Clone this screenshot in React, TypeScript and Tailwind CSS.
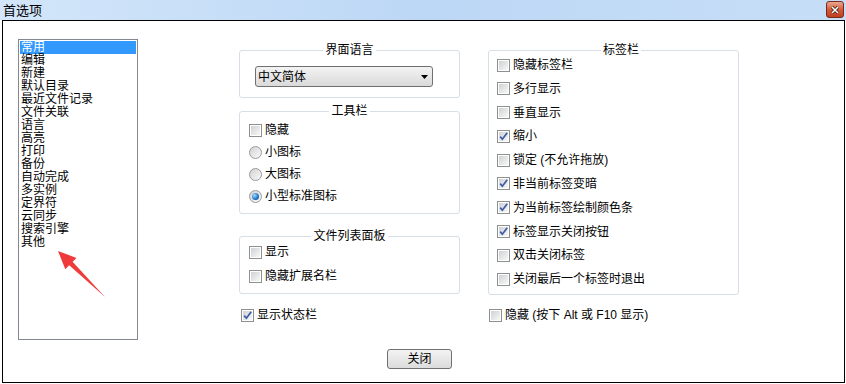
import React from 'react';

// left navigation list of the preferences dialog
const pages = [
  "常用", "编辑", "新建", "默认目录", "最近文件记录", "文件关联", "语言", "高亮",
  "打印", "备份", "自动完成", "多实例", "定界符", "云同步", "搜索引擎", "其他",
];

const tabOptions = [
  { label: "隐藏标签栏", checked: false },
  { label: "多行显示", checked: false },
  { label: "垂直显示", checked: false },
  { label: "缩小", checked: true },
  { label: "锁定 (不允许拖放)", checked: false },
  { label: "非当前标签变暗", checked: true },
  { label: "为当前标签绘制颜色条", checked: true },
  { label: "标签显示关闭按钮", checked: true },
  { label: "双击关闭标签", checked: false },
  { label: "关闭最后一个标签时退出", checked: false },
];

function CheckBox({ checked }: { checked?: boolean }) {
  return (
    <span className="w-[13px] h-[13px] shrink-0 border border-[#8e8f8f] bg-white p-[1px] flex">
      <span className="flex-1 bg-linear-to-br from-[#cfd1d4] to-[#f8f8f8] flex items-center justify-center">
        {checked && (
          <svg width="9" height="9" viewBox="0 0 9 9">
            <path d="M1.2 4.6 L3.4 7.2 L8.2 0.8" stroke="#3d5aa6" strokeWidth="1.7" fill="none" />
          </svg>
        )}
      </span>
    </span>
  );
}

function Radio({ selected }: { selected?: boolean }) {
  return (
    <span className="w-[13px] h-[13px] shrink-0 rounded-full border border-[#9a9a9a] bg-linear-to-br from-[#d2d2d2] to-[#fafafa] flex items-center justify-center">
      {selected && (
        <span className="w-[7px] h-[7px] rounded-full bg-[radial-gradient(circle_at_35%_35%,#9fdcff,#1f72c6_60%,#0b4a92)]" />
      )}
    </span>
  );
}

function Group({ title, legendClass, className, children }: {
  title: string; legendClass?: string; className?: string; children: React.ReactNode;
}) {
  return (
    <fieldset className={`border border-[#d5dfe5] rounded-[3px] ${className ?? ''}`}>
      <legend className={`px-[2px] leading-[14px] ${legendClass ?? 'mx-auto'}`}>{title}</legend>
      {children}
    </fieldset>
  );
}

export default function App() {
  return (
    <div className="relative w-[846px] h-[384px] bg-white overflow-hidden text-[12px] text-black font-['Liberation_Sans','Noto_Sans_CJK_SC',sans-serif]">
      {/* title bar */}
      <div className="h-[20px] flex items-start justify-between bg-linear-to-r from-[#d3e6fa] via-[#bcd7f5] to-[#c7def7]">
        <span className="pl-[3px] pt-[1px] text-[13px] leading-[20px]">首选项</span>
        <span className="mt-[1px] mr-[2px] w-[18px] h-[17px] rounded-[3px] border border-[#7a2a1c] bg-linear-to-b from-[#eaa893] via-[#d45a3b] to-[#c03f1e] flex items-center justify-center">
          <svg width="8" height="8" viewBox="0 0 8 8">
            <path d="M1 1 L7 7 M7 1 L1 7" stroke="#3a1208" strokeWidth="3" />
            <path d="M1 1 L7 7 M7 1 L1 7" stroke="#ffffff" strokeWidth="1.6" />
          </svg>
        </span>
      </div>

      {/* dialog body */}
      <div className="ml-[2px] w-[843px] h-[363px] border border-black flex flex-col">
        <div className="flex items-start">
          <div className="ml-[15px] mt-[18px] w-[120px] h-[301px] border border-[#828790] pt-[1px] px-[1px] leading-[13px]">
            {pages.map((p, i) => (
              <div key={p} className={`h-[13px] pl-[1px] ${i === 0 ? 'bg-[#3399ff] text-white' : ''}`}>{p}</div>
            ))}
          </div>

          <div className="ml-[101px] mt-[22px] w-[221px] flex flex-col">
            <Group title="界面语言">
              <div className="ml-[15px] mt-[9px] mb-[10px] w-[178px] h-[21px] rounded-[3px] border border-[#707070] bg-linear-to-b from-[#f3f3f3] to-[#dadada] flex items-center justify-between pl-[2px] pr-[4px]">
                <span>中文简体</span>
                <svg width="7" height="4" viewBox="0 0 7 4"><path d="M0 0 H7 L3.5 4 Z" fill="#000" /></svg>
              </div>
            </Group>

            <Group title="工具栏" className="mt-[6px] pb-[6px]">
              <div className="flex flex-col mt-[1px] pl-[9px]">
                <label className="h-[22px] flex items-center gap-[3px]"><CheckBox />隐藏</label>
                <label className="h-[22px] flex items-center gap-[3px]"><Radio />小图标</label>
                <label className="h-[22px] flex items-center gap-[3px]"><Radio />大图标</label>
                <label className="h-[22px] flex items-center gap-[3px]"><Radio selected />小型标准图标</label>
              </div>
            </Group>

            <Group title="文件列表面板" className="mt-[15px] pb-[6px]">
              <div className="flex flex-col gap-[2px] -mt-[2px] pl-[9px]">
                <label className="h-[22px] flex items-center gap-[3px]"><CheckBox />显示</label>
                <label className="h-[22px] flex items-center gap-[3px]"><CheckBox />隐藏扩展名栏</label>
              </div>
            </Group>

            <label className="mt-[10px] pl-[2px] h-[22px] flex items-center gap-[3px]"><CheckBox checked />显示状态栏</label>
          </div>

          <div className="ml-[28px] mt-[22px] w-[251px] flex flex-col">
            <Group title="标签栏" legendClass="ml-[112px]" className="pb-[7px]">
              <div className="flex flex-col gap-[7.8px] pl-[8px]">
                {tabOptions.map((o) => (
                  <label key={o.label} className="h-[16px] flex items-center gap-[3px]">
                    <CheckBox checked={o.checked} />{o.label}
                  </label>
                ))}
              </div>
            </Group>
            <label className="mt-[12px] pl-[1px] h-[16px] flex items-center gap-[3px]"><CheckBox />隐藏 (按下 Alt 或 F10 显示)</label>
          </div>
        </div>

        <div className="mt-[9px] ml-[384px]">
          <button className="w-[65px] h-[20px] rounded-[3px] border border-[#707070] bg-linear-to-b from-[#f3f3f3] to-[#dcdcdc] leading-[18px]">关闭</button>
        </div>
      </div>

      {/* red annotation arrow */}
      <svg className="absolute left-0 top-0 pointer-events-none" width="846" height="384">
        <polygon points="58,251 76.5,257.9 72.6,261.8 105,297 69.2,265.3 65.3,269.3" fill="#ef3b3b" />
      </svg>
    </div>
  );
}
